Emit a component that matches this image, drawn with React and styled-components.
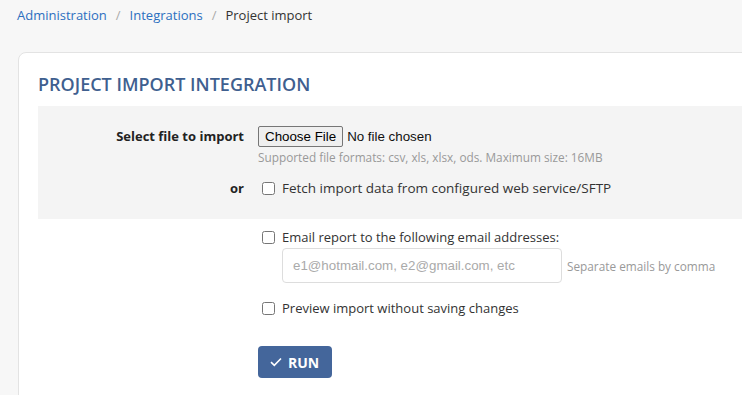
import styled, { createGlobalStyle } from "styled-components";

const GlobalStyle = createGlobalStyle`
  html, body {
    margin: 0;
    padding: 0;
    background: #f7f7f7;
    overflow: hidden;
  }
  body {
    font-family: "Open Sans", "Liberation Sans", sans-serif;
    font-size: 13px;
    color: #333;
  }
`;

const Page = styled.div`
  display: flex;
  flex-direction: column;
  width: 742px;
  height: 395px;
  overflow: hidden;
`;

const Breadcrumb = styled.nav`
  display: flex;
  align-items: center;
  gap: 9px;
  height: 18px;
  padding: 6px 0 0 17px;
  font-size: 13px;
`;

const Crumb = styled.a`
  color: ${(p) => (p.$current ? "#333" : "#2c6fbf")};
  text-decoration: none;
`;

const Sep = styled.span`
  color: #aaa;
`;

const Card = styled.section`
  box-sizing: border-box;
  width: 780px;
  margin: 28px 0 0 18px;
  padding: 18px 0 40px 19px;
  background: #fff;
  border: 1px solid #e3e3e3;
  border-radius: 8px;
`;

const Title = styled.h2`
  margin: 0 0 9px;
  font-size: 18px;
  font-weight: 600;
  line-height: 26px;
  color: #3f5f8f;
  text-transform: uppercase;
`;

const GraySection = styled.div`
  display: flex;
  flex-direction: column;
  gap: 13px;
  padding: 20px 0 21px;
  background: #f4f4f4;
`;

const PlainSection = styled.div`
  display: flex;
  flex-direction: column;
  gap: 15px;
  padding: 8px 0 0;
`;

const Row = styled.div`
  display: grid;
  grid-template-columns: 206px 1fr;
  column-gap: 14px;
  align-items: start;
`;

const Label = styled.div`
  text-align: right;
  font-weight: 700;
  color: #222;
  line-height: 20px;
`;

const Field = styled.div`
  display: flex;
  flex-direction: column;
  align-items: flex-start;
`;

const FileInput = styled.input`
  font-family: "Liberation Sans", Arial, sans-serif;
  font-size: 13.33px;
  color: #111;
  height: 21px;

  &::file-selector-button {
    font-family: "Liberation Sans", Arial, sans-serif;
    font-size: 13.33px;
    height: 21px;
    padding: 1px 6px;
    margin-right: 4px;
    background: #efefef;
    border: 1px solid #767676;
    border-radius: 2px;
    color: #000;
  }
`;

const Help = styled.div`
  margin-top: 3px;
  font-size: 11.8px;
  line-height: 15px;
  color: #999;
`;

const Check = styled.label`
  display: flex;
  align-items: center;
  gap: 7px;
  line-height: 20px;
  font-size: ${(p) => p.$size || "13px"};
  color: #333;

  input {
    width: 13px;
    height: 13px;
    margin: 0 0 0 4px;
  }
`;

const EmailLine = styled.div`
  display: flex;
  align-items: center;
  gap: 5px;
  margin: 1px 0 0 24px;
`;

const EmailInput = styled.input`
  box-sizing: border-box;
  width: 280px;
  height: 35px;
  padding: 0 10px;
  border: 1px solid #ddd;
  border-radius: 4px;
  background: #fff;
  font-family: "Liberation Sans", Arial, sans-serif;
  font-size: 13.33px;
  outline: none;

  &::placeholder {
    color: #aaa;
  }
`;

const Note = styled.span`
  font-size: 11.8px;
  color: #999;
`;

const RunButton = styled.button`
  display: flex;
  align-items: center;
  gap: 6px;
  height: 32px;
  margin-top: 28px;
  padding: 0 13px 0 12px;
  background: #44669b;
  border: none;
  border-radius: 4px;
  color: #fff;
  font-family: "Open Sans", sans-serif;
  font-size: 14px;
  font-weight: 700;
`;

const CheckIcon = () => (
  <svg width="12" height="10" viewBox="0 0 12 10" fill="none">
    <path d="M1 5.2 L4.3 8.3 L11 1.5" stroke="#fff" strokeWidth="1.6" />
  </svg>
);

export default function App() {
  return (
    <Page>
      <GlobalStyle />
      <Breadcrumb>
        <Crumb href="#">Administration</Crumb>
        <Sep>/</Sep>
        <Crumb href="#">Integrations</Crumb>
        <Sep>/</Sep>
        <Crumb $current>Project import</Crumb>
      </Breadcrumb>
      <Card>
        <Title>Project import integration</Title>
        <GraySection>
          <Row>
            <Label>Select file to import</Label>
            <Field>
              <FileInput type="file" />
              <Help>Supported file formats: csv, xls, xlsx, ods. Maximum size: 16MB</Help>
            </Field>
          </Row>
          <Row>
            <Label>or</Label>
            <Field>
              <Check $size="13.5px">
                <input type="checkbox" />
                Fetch import data from configured web service/SFTP
              </Check>
            </Field>
          </Row>
        </GraySection>
        <PlainSection>
          <Row>
            <span />
            <Field>
              <Check>
                <input type="checkbox" />
                Email report to the following email addresses:
              </Check>
              <EmailLine>
                <EmailInput placeholder="e1@hotmail.com, e2@gmail.com, etc" />
                <Note>Separate emails by comma</Note>
              </EmailLine>
            </Field>
          </Row>
          <Row>
            <span />
            <Field>
              <Check>
                <input type="checkbox" />
                Preview import without saving changes
              </Check>
              <RunButton>
                <CheckIcon />
                RUN
              </RunButton>
            </Field>
          </Row>
        </PlainSection>
      </Card>
    </Page>
  );
}
